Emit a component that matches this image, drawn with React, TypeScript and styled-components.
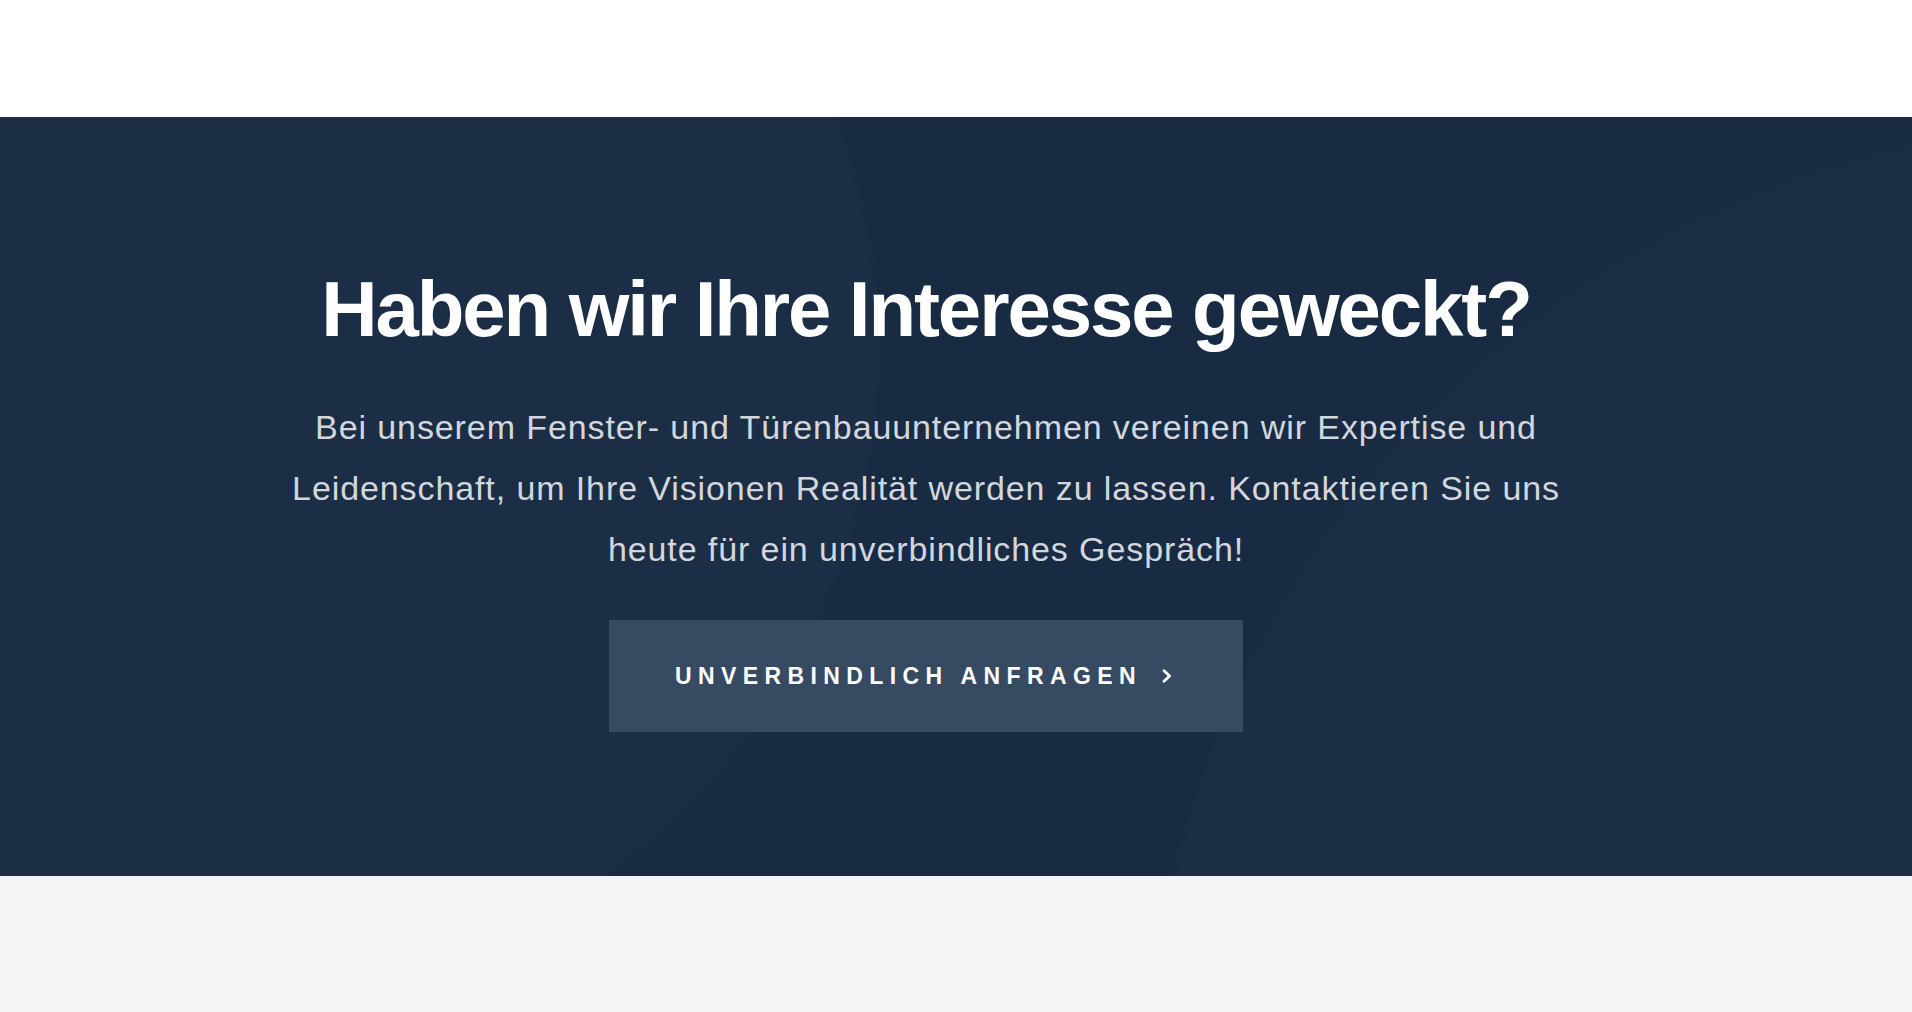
import React from "react";
import styled, { createGlobalStyle } from "styled-components";

const GlobalStyle = createGlobalStyle`
  *, *::before, *::after { box-sizing: border-box; }
  html, body { margin: 0; padding: 0; }
  body {
    background: #f3f4f6;
    font-family: "Liberation Sans", Arial, Helvetica, sans-serif;
    -webkit-font-smoothing: antialiased;
  }
`;

const Page = styled.div`
  display: flex;
  flex-direction: column;
  min-height: 1012px;
`;

const TopBand = styled.div`
  height: 117px;
  background: #ffffff;
`;

const CtaSection = styled.section`
  position: relative;
  overflow: hidden;
  background: #182b43;
  padding: 153px 60px 144px 0;
`;

/* soft decorative discs behind the call-to-action */
const Glow = styled.div<{ $left: number; $top: number; $size: number }>`
  position: absolute;
  left: ${(p) => p.$left}px;
  top: ${(p) => p.$top}px;
  width: ${(p) => p.$size}px;
  height: ${(p) => p.$size}px;
  border-radius: 50%;
  background: rgba(255, 255, 255, 0.016);
  filter: blur(3px);
  pointer-events: none;
`;

const Content = styled.div`
  position: relative;
  z-index: 1;
  display: flex;
  flex-direction: column;
  align-items: center;
  text-align: center;
`;

const Heading = styled.h2`
  margin: 0;
  font-family: "Liberation Sans", Arial, Helvetica, sans-serif;
  font-weight: 700;
  font-size: 78px;
  line-height: 78px;
  letter-spacing: -2.1px;
  color: #ffffff;
`;

const Lead = styled.p`
  margin: 49px 0 0;
  max-width: 1290px;
  font-size: 34px;
  line-height: 61px;
  letter-spacing: 0.9px;
  color: #d3d7dd;
`;

const CtaButton = styled.a`
  margin-top: 40px;
  height: 112px;
  display: inline-flex;
  align-items: center;
  gap: 20px;
  padding: 0 71px 0 66px;
  background: #364a61;
  color: #ffffff;
  text-decoration: none;
  font-weight: 700;
  font-size: 23px;
  letter-spacing: 6.4px;
  text-transform: uppercase;
  cursor: pointer;
`;

const ChevronIcon = styled.svg`
  flex: none;
  width: 10px;
  height: 14px;
`;

const NextSection = styled.div`
  flex: 1;
  background: #f3f4f6;
`;

export default function App() {
  return (
    <>
      <GlobalStyle />
      <Page>
        <TopBand />
        <CtaSection>
          <Glow $left={-420} $top={-420} $size={1300} />
          <Glow $left={1146} $top={4} $size={1952} />
          <Content>
            <Heading>Haben wir Ihre Interesse geweckt?</Heading>
            <Lead>
              Bei unserem Fenster- und Türenbauunternehmen vereinen wir Expertise und
              Leidenschaft, um Ihre Visionen Realität werden zu lassen. Kontaktieren Sie uns
              heute für ein unverbindliches Gespräch!
            </Lead>
            <CtaButton href="#kontakt">
              Unverbindlich anfragen
              <ChevronIcon viewBox="0 0 10 14" aria-hidden="true">
                <polyline
                  points="2,1.8 7.6,7 2,12.2"
                  fill="none"
                  stroke="#ffffff"
                  strokeWidth="2.8"
                  strokeLinecap="round"
                  strokeLinejoin="round"
                />
              </ChevronIcon>
            </CtaButton>
          </Content>
        </CtaSection>
        <NextSection />
      </Page>
    </>
  );
}
